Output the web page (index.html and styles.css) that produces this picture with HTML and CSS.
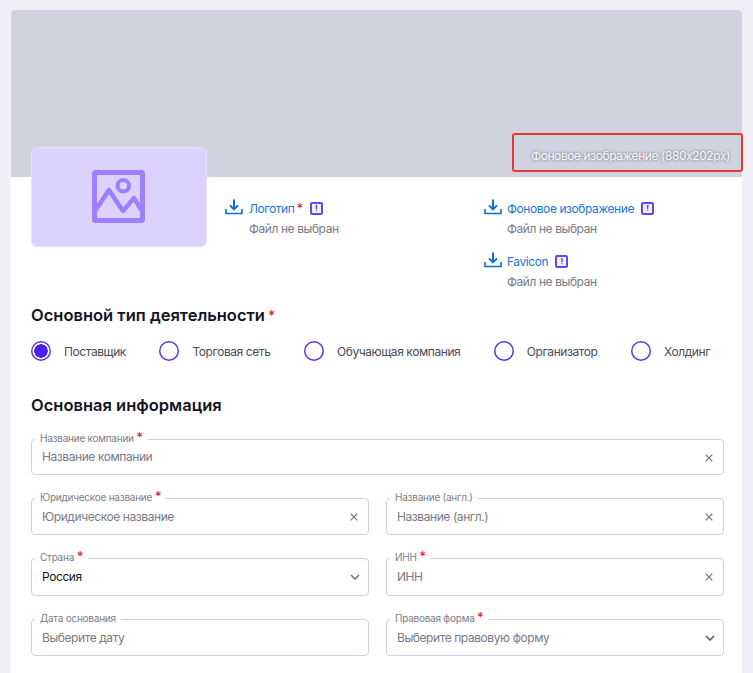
FILE: index.html
```html
<!DOCTYPE html>
<html lang="ru">
<head>
<meta charset="utf-8">
<title>Компания</title>
<link rel="stylesheet" href="styles.css">
</head>
<body>
<svg class="defs" width="0" height="0" aria-hidden="true">
  <symbol id="dl" viewBox="0 0 18 16"><path d="M9 0.5V10M5 6.4L9 10.4L13 6.4" fill="none" stroke="currentColor" stroke-width="2"/><path d="M1 10V14.5H17V10" fill="none" stroke="currentColor" stroke-width="1.6"/></symbol>
  <symbol id="x" viewBox="0 0 8 8"><path d="M.7.7L7.3 7.3M7.3.7L.7 7.3" fill="none" stroke="currentColor" stroke-width="1.2"/></symbol>
  <symbol id="chev" viewBox="0 0 10 6"><path d="M1 1L5 5L9 1" fill="none" stroke="currentColor" stroke-width="1.6"/></symbol>
</svg>
<main class="card">
  <div class="banner"><span class="banner-note">Фоновое изображение (880x202px)</span></div>
  <div class="content">
    <section class="media">
      <div class="logo">
        <svg width="53" height="53" viewBox="0 0 53 53"><rect x="2.500" y="2.500" width="48" height="48" rx="1" fill="none" stroke="#9d7fff" stroke-width="5"/><circle cx="31.300" cy="15.700" r="5.700" fill="none" stroke="#9d7fff" stroke-width="4"/><path d="M3 41L17 20L31 41L42 28L50 41" fill="none" stroke="#9d7fff" stroke-width="4.500" stroke-linejoin="round"/></svg>
      </div>
      <div class="uploads">
        <div class="upload">
          <svg class="dl"><use href="#dl"/></svg>
          <div><div class="up-title"><span class="link">Логотип</span><span class="req">*</span><i class="info">!</i></div><div class="up-file">Файл не выбран</div></div>
        </div>
        <div class="upload-stack">
          <div class="upload">
            <svg class="dl"><use href="#dl"/></svg>
            <div><div class="up-title"><span class="link">Фоновое изображение</span><i class="info">!</i></div><div class="up-file">Файл не выбран</div></div>
          </div>
          <div class="upload">
            <svg class="dl"><use href="#dl"/></svg>
            <div><div class="up-title"><span class="link">Favicon</span><i class="info">!</i></div><div class="up-file">Файл не выбран</div></div>
          </div>
        </div>
      </div>
    </section>
    <h2 class="h-type">Основной тип деятельности<span class="req">*</span></h2>
    <div class="radios">
      <label class="radio"><i class="dot on"></i>Поставщик</label>
      <label class="radio"><i class="dot"></i>Торговая сеть</label>
      <label class="radio"><i class="dot"></i>Обучающая компания</label>
      <label class="radio"><i class="dot"></i>Организатор</label>
      <label class="radio"><i class="dot"></i>Холдинг</label>
    </div>
    <h2 class="h-info">Основная информация</h2>
    <div class="form">
      <div class="field wide"><span class="lbl">Название компании <b class="req">*</b></span><span class="ph">Название компании</span><svg class="ic-x"><use href="#x"/></svg></div>
      <div class="field"><span class="lbl">Юридическое название <b class="req">*</b></span><span class="ph">Юридическое название</span><svg class="ic-x"><use href="#x"/></svg></div>
      <div class="field"><span class="lbl">Название (англ.)</span><span class="ph">Название (англ.)</span><svg class="ic-x"><use href="#x"/></svg></div>
      <div class="field"><span class="lbl">Страна <b class="req">*</b></span><span class="val">Россия</span><svg class="ic-chev"><use href="#chev"/></svg></div>
      <div class="field"><span class="lbl">ИНН <b class="req">*</b></span><span class="ph">ИНН</span><svg class="ic-x"><use href="#x"/></svg></div>
      <div class="field"><span class="lbl">Дата основания</span><span class="ph">Выберите дату</span></div>
      <div class="field"><span class="lbl">Правовая форма <b class="req">*</b></span><span class="ph">Выберите правовую форму</span><svg class="ic-chev dark"><use href="#chev"/></svg></div>
    </div>
  </div>
</main>
<div class="callout"></div>
</body>
</html>
```
FILE: styles.css
```css
* { box-sizing: border-box; }
html, body { height: 100%; }
body {
  margin: 0;
  padding: 10px 11px 0;
  background: #efeff5;
  font-family: Inter, "Noto Sans", sans-serif;
  letter-spacing: -.42px;
  color: #14141f;
  overflow: hidden;
  position: relative;
}
.defs { position: absolute; }
.card { background: #fff; border-radius: 4px 4px 0 0; height: 663px; overflow: hidden; }
.banner {
  height: 167px;
  background: #d0d2e0;
  display: flex;
  justify-content: flex-end;
  align-items: flex-end;
  padding: 0 12px 13px 0;
}
.banner-note {
  font-size: 12px;
  line-height: 16px;
  color: #fbfbfd;
  text-shadow: 0 0 3px rgba(60, 60, 85, .8);
}
.content { padding: 0 18px 0 20px; }
.media { display: flex; height: 152px; margin-top: -30px; }
.logo {
  width: 176px;
  height: 100px;
  flex: none;
  background: #dcd2ff;
  border: 1px solid #e6e2fb;
  border-radius: 6px;
  padding: 0 1px 1px 0;
  display: flex;
  align-items: center;
  justify-content: center;
}
.uploads { display: flex; padding: 52px 0 0 18px; }
.uploads > .upload { width: 259px; }
.upload-stack { display: flex; flex-direction: column; gap: 15px; }
.upload { display: flex; gap: 6px; }
.upload-stack .upload { gap: 5px; }
.dl { width: 18px; height: 16px; color: #0b6fd6; flex: none; }
.up-title { display: flex; align-items: center; height: 18px; font-size: 12px; }
.link { color: #1b74d8; }
.req { color: #e8212e; font-weight: 500; }
.up-title .req { margin-left: 2px; font-size: 13px; line-height: 12px; height: 12px; }
.info {
  display: inline-flex;
  width: 13px;
  height: 13px;
  align-items: center;
  justify-content: center;
  margin-left: 7px;
  border: 2px solid #6a45f5;
  border-radius: 2px;
  background: #f4f1ff;
  font: 700 8px/1 Inter, sans-serif;
  color: #4a22ef;
}
.up-file { margin-top: 4px; font-size: 12px; line-height: 16px; color: #797b85; }
h2 { margin: 0; font-size: 16.500px; line-height: 20px; font-weight: 600; letter-spacing: 0; color: #14141f; }
h2 .req { font-size: 14px; margin-left: 3px; }
.h-type { margin-top: 6px; }
.radios { display: flex; gap: 33.500px; margin-top: 15px; height: 20px; }
.radio { display: flex; align-items: center; gap: 13px; font-size: 12px; color: #4a4b57; }
.dot { width: 20px; height: 20px; border-radius: 50%; flex: none; box-shadow: inset 0 0 0 1.500px #5b34f0; }
.dot.on { background: radial-gradient(circle, #4a22ef 0 6.500px, #fff 7px); }
.h-info { margin-top: 34px; }
.form {
  display: grid;
  grid-template-columns: 338px 338px;
  grid-template-rows: 36px 37px 38px 37px;
  column-gap: 17px;
  row-gap: 23px;
  margin-top: 24px;
}
.field {
  position: relative;
  display: flex;
  align-items: center;
  border: 1px solid #d0d0e2;
  border-radius: 4px;
  padding: 0 10px 1px;
  font-size: 12px;
}
.wide { grid-column: 1 / -1; }
.lbl {
  position: absolute;
  left: 3px;
  top: -8px;
  padding: 0 5px;
  background: #fff;
  font-size: 10px;
  line-height: 12px;
  letter-spacing: -.24px;
  color: #7c7d88;
  white-space: nowrap;
}
.lbl .req { font-size: 13px; line-height: 8px; }
.ph { color: #797b85; }
.val { color: #14141f; }
.ic-x { position: absolute; right: 10px; top: 14px; width: 8px; height: 8px; color: #70727c; }
.ic-chev { position: absolute; right: 8px; top: 15px; width: 10px; height: 6px; color: #70727c; }
.ic-chev.dark { color: #565862; }
.callout {
  position: absolute;
  left: 512px;
  top: 133px;
  width: 231px;
  height: 39px;
  border: 2.500px solid #e5392f;
  border-radius: 3px;
}
```
